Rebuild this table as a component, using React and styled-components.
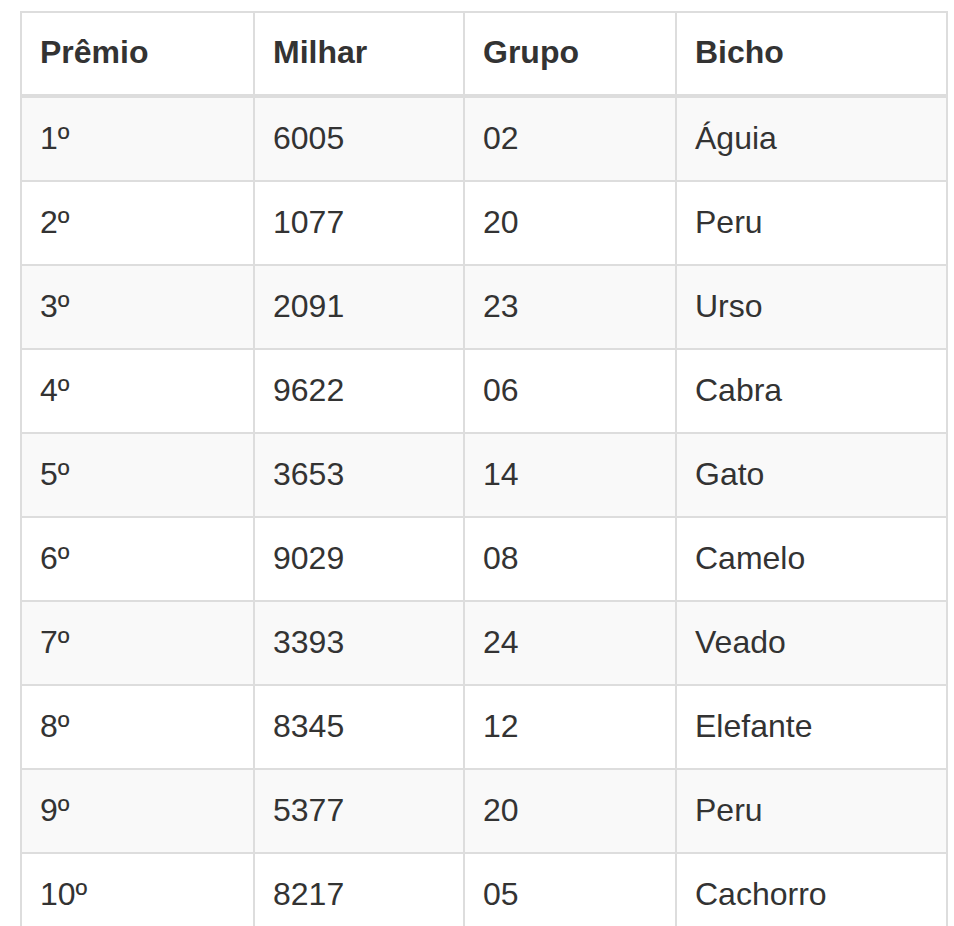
import React from 'react';
import styled, { createGlobalStyle } from 'styled-components';

const GlobalStyle = createGlobalStyle`
  html, body {
    margin: 0;
    padding: 0;
    background: #fff;
  }
  body {
    font-family: "Liberation Sans", Arial, sans-serif;
    color: #333;
  }
`;

const Page = styled.div`
  padding: 11px 0 0 20px;
`;

const Table = styled.table`
  width: 928px;
  border-collapse: collapse;
  table-layout: fixed;
  font-size: 32px;
  line-height: 40px;
`;

const HeadCell = styled.th`
  width: ${(p) => p.$w - 38}px;
  text-align: left;
  font-weight: 700;
  color: #333;
  padding: 19px 18px 22px;
  border: 2px solid #ddd;
  border-bottom-width: 4px;
`;

const Row = styled.tr`
  background: ${(p) => (p.$striped ? '#f9f9f9' : '#fff')};
`;

const Cell = styled.td`
  padding: 20px 18px 22px;
  border: 2px solid #ddd;
  color: #333;
`;

const columns = [
  { label: 'Prêmio', w: 233 },
  { label: 'Milhar', w: 210 },
  { label: 'Grupo', w: 212 },
  { label: 'Bicho', w: 271 },
];

const results = [
  ['1º', '6005', '02', 'Águia'],
  ['2º', '1077', '20', 'Peru'],
  ['3º', '2091', '23', 'Urso'],
  ['4º', '9622', '06', 'Cabra'],
  ['5º', '3653', '14', 'Gato'],
  ['6º', '9029', '08', 'Camelo'],
  ['7º', '3393', '24', 'Veado'],
  ['8º', '8345', '12', 'Elefante'],
  ['9º', '5377', '20', 'Peru'],
  ['10º', '8217', '05', 'Cachorro'],
];

export default function App() {
  return (
    <>
      <GlobalStyle />
      <Page>
        <Table>
          <thead>
            <tr>
              {columns.map((c) => (
                <HeadCell key={c.label} $w={c.w}>
                  {c.label}
                </HeadCell>
              ))}
            </tr>
          </thead>
          <tbody>
            {results.map((r, i) => (
              <Row key={r[0]} $striped={i % 2 === 0}>
                {r.map((v, j) => (
                  <Cell key={j}>{v}</Cell>
                ))}
              </Row>
            ))}
          </tbody>
        </Table>
      </Page>
    </>
  );
}
